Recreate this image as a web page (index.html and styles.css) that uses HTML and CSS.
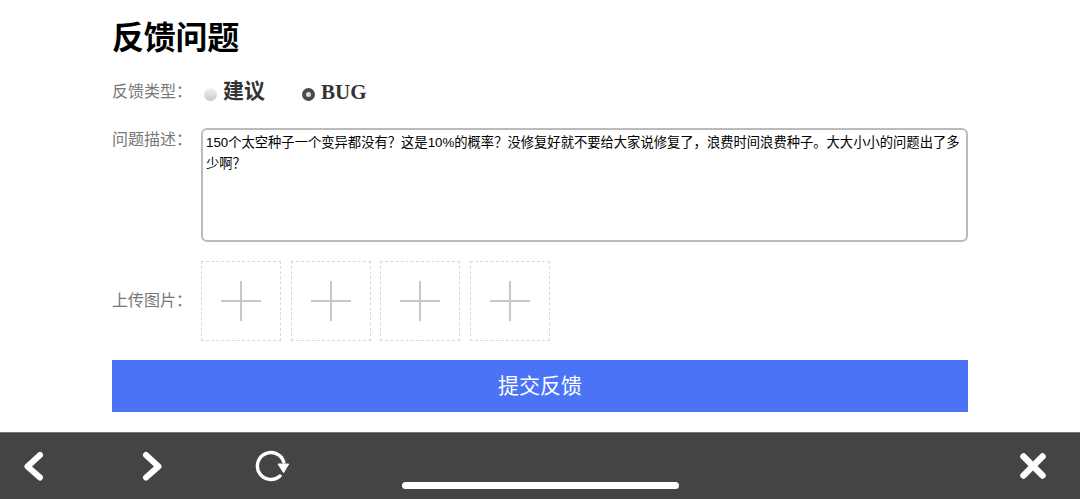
FILE: index.html
```html
<!DOCTYPE html>
<html lang="zh">
<head>
<meta charset="utf-8">
<title>反馈问题</title>
<link rel="stylesheet" href="styles.css">
</head>
<body>
<main class="page">
  <h1 class="title">反馈问题</h1>
  <div class="row type-row">
    <span class="label">反馈类型：</span>
    <div class="options">
      <label class="option"><i class="radio"></i><b class="opt-text">建议</b></label>
      <label class="option bug"><i class="radio on"></i><b class="opt-text">BUG</b></label>
    </div>
  </div>
  <div class="row desc-row">
    <span class="label">问题描述：</span>
    <textarea class="desc">150个太空种子一个变异都没有？这是10%的概率？没修复好就不要给大家说修复了，浪费时间浪费种子。大大小小的问题出了多少啊？</textarea>
  </div>
  <div class="row upload-row">
    <span class="label">上传图片：</span>
    <div class="uploads">
      <div class="upload"><svg viewBox="0 0 40 40" width="40" height="40"><path d="M0 20H40M20 0V40" stroke="#c8c8c8" stroke-width="2" fill="none"/></svg></div>
      <div class="upload"><svg viewBox="0 0 40 40" width="40" height="40"><path d="M0 20H40M20 0V40" stroke="#c8c8c8" stroke-width="2" fill="none"/></svg></div>
      <div class="upload"><svg viewBox="0 0 40 40" width="40" height="40"><path d="M0 20H40M20 0V40" stroke="#c8c8c8" stroke-width="2" fill="none"/></svg></div>
      <div class="upload"><svg viewBox="0 0 40 40" width="40" height="40"><path d="M0 20H40M20 0V40" stroke="#c8c8c8" stroke-width="2" fill="none"/></svg></div>
    </div>
  </div>
  <button class="submit">提交反馈</button>
</main>
<nav class="toolbar">
  <div class="tools-left">
    <svg class="tool" viewBox="0 0 24 32" width="24" height="32"><path d="M19 5 L6.5 16.5 L19 27.5" fill="none" stroke="#fff" stroke-width="6" stroke-linecap="round" stroke-linejoin="round"/></svg>
    <svg class="tool" viewBox="0 0 24 32" width="24" height="32"><path d="M6 5 L18.5 16.5 L6 27.5" fill="none" stroke="#fff" stroke-width="6" stroke-linecap="round" stroke-linejoin="round"/></svg>
    <svg class="tool reload" viewBox="0 0 36 34" width="36" height="34"><path d="M25 27 A13.5 13.5 0 1 1 28.8 13" fill="none" stroke="#fff" stroke-width="3.4" stroke-linecap="round"/><path d="M23 15 H33.7 L28.6 23.7 Z" fill="#fff" stroke="#fff" stroke-width="1" stroke-linejoin="round"/></svg>
  </div>
  <svg class="tool" viewBox="0 0 28 28" width="28" height="28"><path d="M4.5 4.5 L23.5 23.5 M23.5 4.5 L4.5 23.5" fill="none" stroke="#fff" stroke-width="6.5" stroke-linecap="round"/></svg>
  <span class="home"></span>
</nav>
</body>
</html>
```

FILE: styles.css
```css
* { box-sizing: border-box; }
html, body { margin: 0; padding: 0; }
body {
  width: 1080px;
  height: 499px;
  overflow: hidden;
  background: #fff;
  font-family: "Liberation Sans", "Noto Sans CJK SC", sans-serif;
  display: flex;
  flex-direction: column;
}
.page {
  height: 432px;
  padding: 0 112px;
  display: flex;
  flex-direction: column;
}
.title {
  margin: 17px 0 0;
  font-size: 32px;
  line-height: 42px;
  letter-spacing: -0.25px;
  font-weight: 700;
  color: #000;
}
.row { display: flex; }
.label {
  width: 89px;
  flex: none;
  font-size: 16px;
  color: #777;
  white-space: nowrap;
}
.type-row {
  margin-top: 12px;
  height: 40px;
  align-items: center;
}
.type-row .label { margin-top: -2px; }
.options { display: flex; padding-left: 3px; }
.option {
  display: flex;
  align-items: center;
  gap: 6px;
  width: 98px;
  color: #333;
}
.opt-text {
  font-family: "Liberation Serif", "Noto Sans CJK SC", serif;
  font-size: 21px;
  line-height: 30px;
  font-weight: 700;
}
.bug .opt-text { margin-top: 2px; }
.radio {
  width: 13px;
  height: 13px;
  margin-top: 7px;
  border-radius: 50%;
  background: linear-gradient(#f4f4f4, #c8c8c8);
}
.radio.on {
  background: #ddd;
  border: 4.5px solid #4a4a4a;
}
.desc-row { margin-top: 17px; }
.desc-row .label { line-height: 24px; }
.desc {
  display: block;
  width: 767px;
  height: 114px;
  padding: 2px 3px;
  border: 2px solid #bbb;
  border-radius: 6px;
  font-family: inherit;
  font-size: 13.3px;
  line-height: 21px;
  color: #000;
  resize: none;
  outline: none;
  overflow: hidden;
}
.upload-row { margin-top: 19px; align-items: center; }
.upload-row .label { margin-top: -4px; }
.uploads { display: flex; gap: 9.6px; }
.upload {
  width: 80px;
  height: 80px;
  border: 1px dashed #d8d8d8;
  display: flex;
  align-items: center;
  justify-content: center;
}
.submit {
  margin-top: 19px;
  height: 52px;
  border: 0;
  padding: 0 0 5px;
  background: #4a73f5;
  color: #fff;
  font-family: inherit;
  font-size: 21px;
}
.toolbar {
  position: relative;
  height: 67px;
  background: #444;
  border-top: 1px solid #777;
  display: flex;
  align-items: center;
  justify-content: space-between;
  padding: 0 33px 1px 21px;
}
.tools-left { display: flex; align-items: center; gap: 95px; }
.reload { margin-left: -4px; }
.tool { display: block; }
.home {
  position: absolute;
  left: 402px;
  top: 49px;
  width: 277px;
  height: 7px;
  border-radius: 4px;
  background: #fff;
}
```
